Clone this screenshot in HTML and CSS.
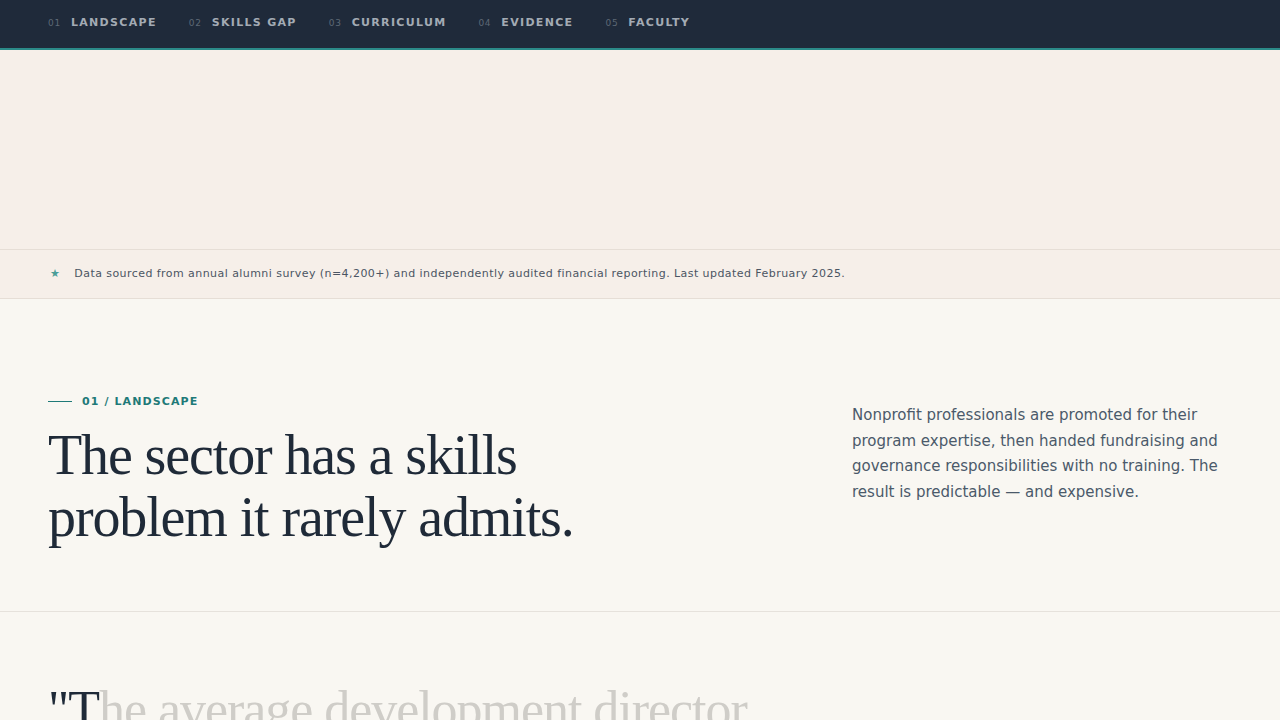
FILE: index.html
```html
<!DOCTYPE html>
<html lang="en">

<head>
  <meta charset="UTF-8">
  <meta name="viewport" content="width=device-width, initial-scale=1.0">
  <title>Nonprofit Leadership Program</title>
  <link rel="stylesheet" href="styles.css">
</head>

<body>

  <!-- top nav -->
  <nav class="topnav">
    <a href="#landscape" class="nav-link"><span class="nav-num">01</span>Landscape</a>
    <a href="#gap" class="nav-link"><span class="nav-num">02</span>Skills Gap</a>
    <a href="#curriculum" class="nav-link"><span class="nav-num">03</span>Curriculum</a>
    <a href="#evidence" class="nav-link"><span class="nav-num">04</span>Evidence</a>
    <a href="#faculty" class="nav-link"><span class="nav-num">05</span>Faculty</a>
  </nav>

  <header class="hero"></header>

  <div class="source-strip">
    <span class="source-star">★</span>
    <span>Data sourced from annual alumni survey (n=4,200+) and independently audited financial reporting. Last updated February 2025.</span>
  </div>

  <!-- 01 landscape -->
  <section id="landscape" class="section">
    <div class="section-main">
      <div class="eyebrow"><span class="eyebrow-line"></span>01 / Landscape</div>
      <h2 class="section-title">The sector has a skills problem it rarely admits.</h2>
    </div>
    <p class="section-lede">
      Nonprofit professionals are promoted for their program expertise, then handed fundraising and
      governance responsibilities with no training. The result is predictable — and expensive.
    </p>
  </section>

  <!-- pull quote -->
  <section class="quote-section">
    <blockquote class="pull-quote"><span class="lit">"T</span>he average development director stays in the role for just eighteen months."</blockquote>
  </section>

</body>

</html>
```

FILE: styles.css
```css
body {
  margin: 0;
  font-family: "DejaVu Sans", sans-serif;
  background: #f9f7f2;
  color: #1f2a38;
}

.topnav {
  display: flex;
  align-items: center;
  gap: 32px;
  height: 45px;
  padding: 0 48px 3px;
  background: #1f2a3a;
  border-bottom: 2px solid #2b8a88;
}

.nav-link {
  display: flex;
  align-items: baseline;
  gap: 10px;
  font-size: 11px;
  font-weight: bold;
  letter-spacing: 0.12em;
  text-transform: uppercase;
  text-decoration: none;
  color: #a3abb4;
}

.nav-num {
  font-size: 9px;
  font-weight: normal;
  letter-spacing: 0.08em;
  color: #5d6875;
}

.hero {
  height: 199px;
  background: #f6efe9;
}

.source-strip {
  display: flex;
  align-items: center;
  gap: 14px;
  height: 47px;
  padding: 0 48px 1px 50px;
  background: #f6efe9;
  border-top: 1px solid #e6ded6;
  border-bottom: 1px solid #e6ded6;
  font-size: 11px;
  letter-spacing: 0.04em;
  color: #4b5563;
}

.source-star {
  color: #4a9e98;
  font-size: 11px;
}

.section {
  display: flex;
  justify-content: space-between;
  padding: 96px 48px 63px;
  border-bottom: 1px solid #e6e2dc;
}

.eyebrow {
  display: flex;
  align-items: center;
  gap: 10px;
  font-size: 11px;
  font-weight: bold;
  letter-spacing: 0.1em;
  text-transform: uppercase;
  color: #1f7a78;
}

.eyebrow-line {
  width: 24px;
  height: 1px;
  background: #1f7a78;
}

.section-title {
  margin: 17px 0 0;
  max-width: 560px;
  font-family: "Liberation Serif", serif;
  font-size: 56px;
  font-weight: normal;
  line-height: 1.1;
  letter-spacing: -0.02em;
  color: #1f2a38;
}

.section-lede {
  width: 380px;
  margin: 8px 0 0;
  font-size: 15px;
  line-height: 1.7;
  color: #4b5a6a;
}

.quote-section {
  padding: 64px 48px;
}

.pull-quote {
  margin: 0;
  max-width: 760px;
  font-family: "Liberation Serif", serif;
  font-size: 52px;
  line-height: 1.3;
  letter-spacing: -0.02em;
  color: #cfcdc8;
}

.lit {
  color: #1f2a38;
}
```
